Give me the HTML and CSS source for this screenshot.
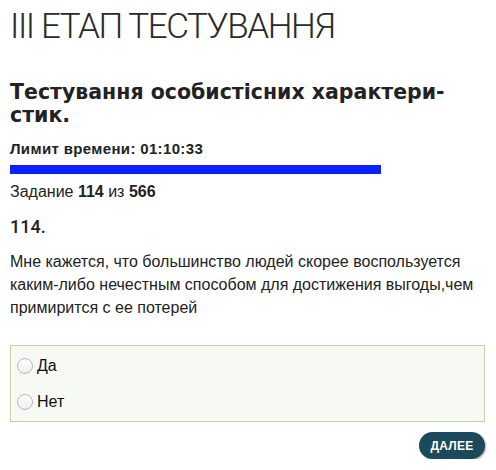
FILE: index.html
```html
<!DOCTYPE html>
<html lang="uk">
<head>
<meta charset="utf-8">
<link rel="stylesheet" href="styles.css">
</head>
<body>
<div class="page">
  <h1 class="stage">III ЕТАП ТЕСТУВАННЯ</h1>
  <h2 class="test-title">Тестування особистісних характери-<br>стик.</h2>
  <div class="timer">Лимит времени: 01:10:33</div>
  <div class="bar-track"><div class="bar" style="width:371px"></div></div>
  <div class="counter">Задание <b>114</b> из <b>566</b></div>
  <div class="qnum">114.</div>
  <p class="question">Мне кажется, что большинство людей скорее воспользуется каким-либо нечестным способом для достижения выгоды,чем примирится с ее потерей</p>
  <div class="answers">
    <label class="answer"><span class="radio"></span>Да</label>
    <label class="answer"><span class="radio"></span>Нет</label>
  </div>
  <div class="actions"><button class="next">ДАЛЕЕ</button></div>
</div>
</body>
</html>
```
FILE: styles.css
```css
* { box-sizing: border-box; }
html, body { margin: 0; padding: 0; background: #fff; }
body { font-family: "Liberation Sans", Arial, sans-serif; color: #222; }
.page { padding: 0 11px 0 10px; }
.stage {
  margin: 0;
  padding-top: 7px;
  font-family: Roboto, "Liberation Sans", sans-serif;
  font-weight: 300;
  font-size: 35px;
  line-height: 40px;
  color: #2a2a2a;
  letter-spacing: -1.4px;
}
.test-title {
  margin: 34px 0 0;
  font-family: "DejaVu Sans", "Liberation Sans", sans-serif;
  font-size: 20.5px;
  line-height: 23px;
  font-weight: 700;
  color: #222;
  letter-spacing: 0;
}
.timer {
  margin-top: 13px;
  font-size: 15px;
  font-weight: 700;
  line-height: 18px;
  letter-spacing: 0.35px;
}
.bar-track { margin-top: 7px; height: 9px; }
.bar { height: 9px; background: #0a22ff; }
.counter { margin-top: 8px; font-size: 16px; line-height: 20px; }
.qnum {
  margin-top: 14px;
  font-family: Roboto, "Liberation Sans", sans-serif;
  font-size: 18px;
  font-weight: 500;
  line-height: 22px;
}
.question { margin: 12px 0 0; font-size: 16px; line-height: 23px; }
.answers {
  margin-top: 26px;
  background: #f7f9f4;
  border: 1px solid #c6cea6;
  padding: 9px 6px 8px;
  display: flex;
  flex-direction: column;
  gap: 14px;
}
.answer { display: flex; align-items: center; gap: 4px; font-size: 16px; line-height: 22px; color: #111; }
.radio {
  width: 16px; height: 16px; border-radius: 50%;
  border: 1px solid #b8b8b8;
  background: linear-gradient(#fdfdfd, #f0f0f0);
}
.actions { display: flex; justify-content: flex-end; margin-top: 10px; }
.next {
  background: #1b4a5c;
  color: #fff;
  border: 0;
  border-radius: 14px;
  height: 27px;
  width: 66px;
  padding: 0;
  font-family: "Liberation Sans", Arial, sans-serif;
  font-weight: 700;
  font-size: 12px;
  letter-spacing: 0.2px;
  box-shadow: 1px 1px 2px rgba(0,0,0,0.35);
}
```
